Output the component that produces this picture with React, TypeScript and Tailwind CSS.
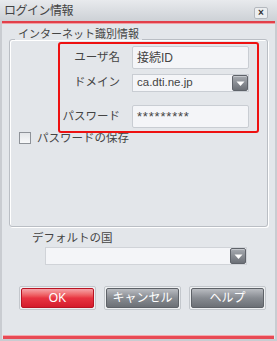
import React from 'react';

const font = { fontFamily: '"Liberation Sans","Noto Sans CJK JP",sans-serif' };

function Arrow() {
  return (
    <div className="w-[16px] h-[16px] rounded-[2px] border border-[#5f636a] bg-gradient-to-b from-[#a7abb1] to-[#6c7077] flex items-center justify-center shadow-[inset_0_1px_0_#c4c7cc]">
      <svg width="9" height="7" viewBox="0 0 9 7">
        <path d="M0.5 1.5 H8.5 L4.5 6 Z" fill="#ffffff" />
      </svg>
    </div>
  );
}

function Btn({ label, red }: { label: string; red?: boolean }) {
  return (
    <div className="w-[77px] h-[24px] p-[1px] rounded-[2px] border border-[#c3c7cc] bg-[#eef0f2]">
      <div
        className={
          red
            ? 'h-full rounded-[2px] border border-[#b81424] bg-gradient-to-b from-[#f4a2a8] via-[#e83442] to-[#d41c2c] flex items-center justify-center text-white text-[12px]'
            : 'h-full rounded-[2px] border border-[#5e6268] bg-gradient-to-b from-[#b9bcc1] via-[#878b91] to-[#6c7076] flex items-center justify-center text-white text-[12px]'
        }
      >
        {label}
      </div>
    </div>
  );
}

export default function App() {
  return (
    <div className="w-[277px] h-[341px] bg-[#e3e6ea] text-[#444444] flex flex-col border-l-2 border-r-2 border-b-2 border-[#c9ccd1]" style={font}>
      {/* title */}
      <div className="h-[21px] flex items-end justify-between bg-gradient-to-b from-[#e8eaed] to-[#cdd1d6] -mx-[2px] pl-[4px] pr-[9px]">
        <span className="text-[12px] leading-[20px] tracking-[-0.5px] self-center">ログイン情報</span>
        <div className="w-[14px] h-[12px] mb-[2px] border border-[#b4b8be] rounded-[2px] bg-[#eceef0] flex items-center justify-center text-[10px] font-bold leading-none text-[#333]">
          ×
        </div>
      </div>
      <div className="h-[3px] bg-[#e2404a] border-b border-[#f0a0a6]" />

      {/* group */}
      <div className="ml-[7px] mr-[7px] mt-[4px] flex flex-col">
        <div className="relative z-10 ml-[6px] px-[3px] w-fit bg-[#e3e6ea] text-[11px] leading-[12px]">インターネット識別情報</div>
        <div className="relative -mt-[1px] h-[188px] rounded-[3px] border border-[#babec4] shadow-[inset_1px_1px_0_#ffffff,1px_1px_0_#ffffff] flex flex-col pt-[6px]">
          <div className="flex items-center h-[23px]">
            <span className="w-[110px] text-right text-[11.5px]">ユーザ名</span>
            <div className="ml-[12px] w-[117px] h-[23px] border border-[#c9cdd3] rounded-[2px] bg-[#f4f5f8] flex items-center pl-[4px] text-[12px]">接続ID</div>
          </div>
          <div className="flex items-center h-[18px] mt-[5px]">
            <span className="w-[110px] text-right text-[11.5px]">ドメイン</span>
            <div className="ml-[12px] w-[117px] h-[18px] border border-[#c9cdd3] bg-[#f4f5f8] flex items-center justify-between pl-[4px] text-[11.5px]">
              <span>ca.dti.ne.jp</span>
              <Arrow />
            </div>
          </div>
          <div className="flex items-center h-[23px] mt-[13px]">
            <span className="w-[110px] text-right text-[11.5px]">パスワード</span>
            <div className="ml-[12px] w-[117px] h-[23px] border border-[#c9cdd3] rounded-[2px] bg-[#f4f5f8] flex items-center pl-[4px] text-[13px] tracking-[0.8px]">*********</div>
          </div>
          <div className="flex items-center mt-[4px] ml-[9px]">
            <div className="w-[12px] h-[12px] border border-[#8e9298] bg-gradient-to-b from-[#e4e6e9] to-[#f8f9fa]" />
            <span className="ml-[6px] text-[11.5px] leading-[12px]">パスワードの保存</span>
          </div>

          {/* highlight */}
          <div className="absolute left-[48px] top-[2px] w-[201px] h-[91px] border-2 border-[#ee1111] rounded-[3px] pointer-events-none" />
        </div>
      </div>

      {/* country */}
      <div className="ml-[30px] mt-[4px] text-[11.5px] leading-[14px]">デフォルトの国</div>
      <div className="ml-[43px] mt-[2px] w-[202px] h-[18px] border border-[#d0d3d8] bg-[#f4f5f8] flex items-center justify-end">
        <Arrow />
      </div>

      {/* buttons */}
      <div className="flex ml-[17px] mt-[21px] gap-[8px]">
        <Btn label="OK" red />
        <Btn label="キャンセル" />
        <Btn label="ヘルプ" />
      </div>

      <div className="mt-auto mx-[1px] h-[4px] bg-[#e84a54] border-t border-[#f5a8ae]" />
    </div>
  );
}
